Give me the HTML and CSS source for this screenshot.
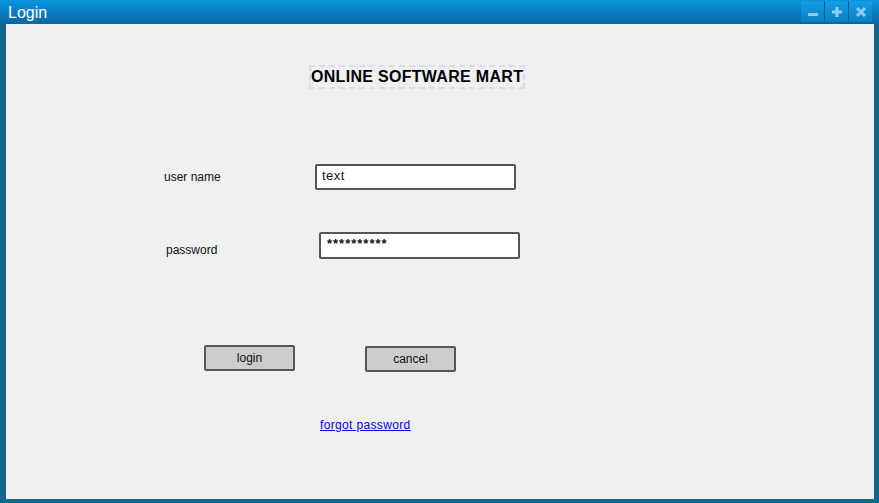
FILE: index.html
```html
<!DOCTYPE html>
<html>
<head>
<meta charset="utf-8">
<link rel="stylesheet" href="styles.css">
</head>
<body>
<div class="window">
  <div class="titlebar">
    <span class="title">Login</span>
    <div class="controls">
      <div class="ctl"><svg width="12" height="12" viewBox="0 0 12 12"><rect x="1" y="7" width="10" height="3" fill="#8fcdf0"/></svg></div>
      <div class="ctl"><svg width="12" height="12" viewBox="0 0 12 12"><rect x="1" y="4.5" width="10" height="3" fill="#8fcdf0"/><rect x="4.5" y="1" width="3" height="10" fill="#8fcdf0"/></svg></div>
      <div class="ctl"><svg width="12" height="12" viewBox="0 0 12 12"><path d="M2 2 L10 10 M10 2 L2 10" stroke="#8fcdf0" stroke-width="3"/></svg></div>
    </div>
  </div>
  <div class="content">
    <div class="heading-row"><h1 class="heading">ONLINE SOFTWARE MART</h1></div>
    <div class="row row-user">
      <span class="label">user name</span>
      <div class="input">text</div>
    </div>
    <div class="row row-pass">
      <span class="label label-pass">password</span>
      <div class="input input-pass">**********</div>
    </div>
    <div class="buttons">
      <div class="btn">login</div>
      <div class="btn btn-cancel">cancel</div>
    </div>
    <div class="link-row"><a class="link" href="#">forgot password</a></div>
  </div>
</div>
</body>
</html>
```
FILE: styles.css
```css
html, body {
  margin: 0;
  padding: 0;
}
body {
  width: 879px;
  height: 503px;
  overflow: hidden;
  font-family: "Liberation Sans", Arial, sans-serif;
}
.window {
  width: 879px;
  height: 503px;
  box-sizing: border-box;
  background: #12658f;
  display: flex;
  flex-direction: column;
}
.titlebar {
  height: 24px;
  flex: none;
  background: linear-gradient(#0a94dc, #0a78bd 60%, #0b66a0);
  display: flex;
  align-items: flex-start;
  justify-content: space-between;
}
.title {
  color: #ffffff;
  font-size: 16px;
  line-height: 16px;
  padding: 5px 0 0 8px;
}
.controls {
  display: flex;
  margin: 1px 7px 0 0;
}
.ctl {
  width: 23px;
  height: 21px;
  background: linear-gradient(#139ee6, #0b7fc4);
  border-left: 1px solid #0a5f92;
  display: flex;
  align-items: center;
  justify-content: center;
}
.ctl:first-child {
  border-left: none;
}
.content {
  flex: 1;
  margin: 0 5px 4px 6px;
  background: #f0f0f0;
  color: #111;
  font-size: 12px;
}
.heading-row {
  padding: 41px 0 0 303px;
}
.heading {
  display: inline-block;
  margin: 0;
  font-size: 16px;
  line-height: 18px;
  font-weight: bold;
  letter-spacing: 0.3px;
  padding: 1px 0 1px 0;
  border: 2px dashed #dadaf0;
  color: #000;
}
.row {
  display: flex;
  align-items: flex-start;
}
.row-user {
  margin-top: 75px;
}
.row-pass {
  margin-top: 42px;
}
.label {
  width: 151px;
  padding-left: 158px;
  padding-top: 6px;
}
.label-pass {
  padding-left: 160px;
  padding-top: 11px;
}
.input {
  width: 197px;
  height: 22px;
  border: 2px solid #555;
  border-radius: 2px;
  background: #fff;
  box-sizing: content-box;
  font-size: 13px;
  line-height: 20px;
  padding: 0;
  text-indent: 5px;
  letter-spacing: 0.5px;
}
.input-pass {
  margin-left: 2px;
  height: 23px;
  text-indent: 6px;
  letter-spacing: 1px;
  font-weight: bold;
}
.buttons {
  display: flex;
  align-items: flex-start;
  margin-top: 86px;
  padding-left: 198px;
}
.btn {
  width: 87px;
  height: 22px;
  border: 2px solid #555;
  border-radius: 2px;
  background: #cccccc;
  text-align: center;
  line-height: 22px;
}
.btn-cancel {
  margin-left: 70px;
  margin-top: 1px;
}
.link-row {
  margin-top: 46px;
  padding-left: 314px;
}
.link {
  color: #0000ff;
  font-size: 12px;
  letter-spacing: 0.35px;
}
```
